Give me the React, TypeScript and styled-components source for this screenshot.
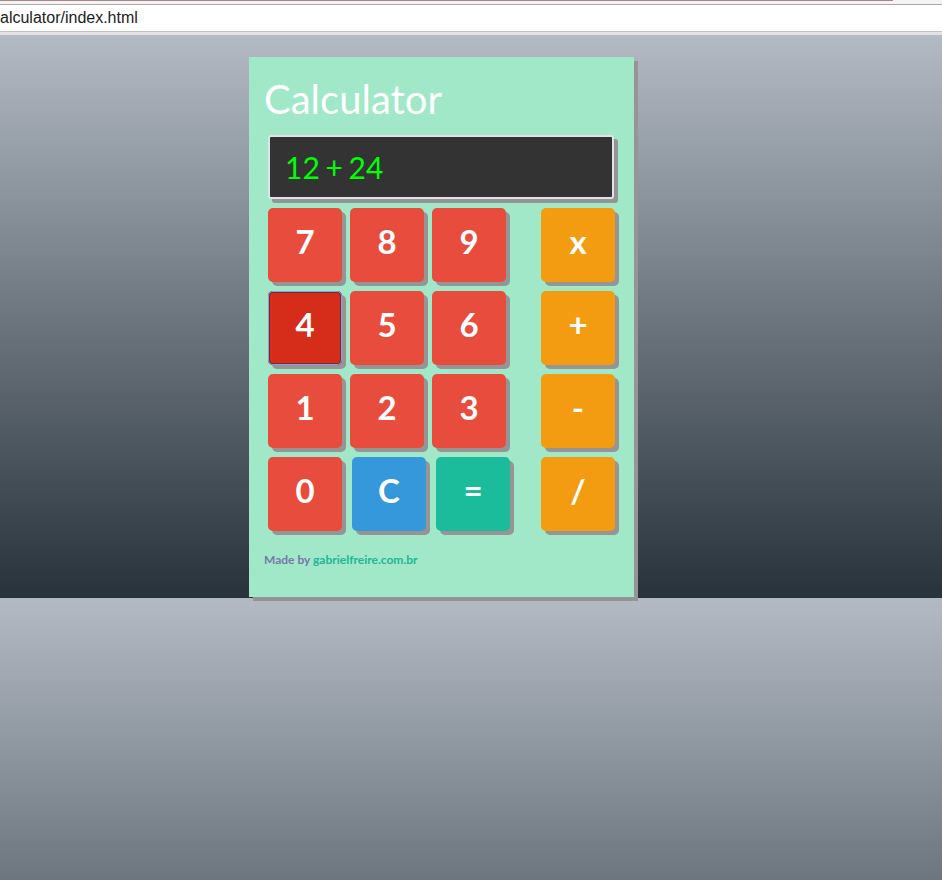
import React from 'react'
import styled, { createGlobalStyle } from 'styled-components'

const GlobalStyle = createGlobalStyle`
    html, body {
        margin: 0;
        padding: 0;
        background: #737b84;
    }
    * {
        box-sizing: border-box;
    }
`

const Screen = styled.div`
    width: 942px;
    height: 880px;
    overflow: hidden;
    display: flex;
    flex-direction: column;
`

const TabStrip = styled.div`
    height: 5px;
    background: #f3f3f3;
    border-bottom: 1px solid #a9a9a9;
`

const TabLine = styled.div`
    width: 893px;
    height: 1px;
    background: #a48686;
`

const AddressBar = styled.div`
    height: 27px;
    background: #ffffff;
    border-bottom: 1px solid #c2c2c2;
    display: flex;
    align-items: center;
    padding-bottom: 1px;
    font-family: 'Liberation Sans', Arial, sans-serif;
    font-size: 16px;
    color: #1c1c1c;
    white-space: nowrap;
`

const BarEdge = styled.div`
    height: 3px;
    background: #e4e4e4;
`

const Page = styled.div`
    flex: 1;
    padding-top: 22px;
    padding-left: 249px;
    background: linear-gradient(#b3bac4, #27323b) 0 0 / 100% 563px repeat-y;
`

const Card = styled.div`
    width: 385px;
    padding: 18px 15px 30px;
    background: #a0e8c8;
    box-shadow: 4px 4px 0 #959595;
    font-family: Lato, 'Open Sans', sans-serif;
`

const Title = styled.h1`
    margin: 0 0 12px;
    font-size: 40px;
    line-height: 48px;
    font-weight: 400;
    color: #ffffff;
`

const Display = styled.div`
    width: 346px;
    height: 64px;
    margin-left: 4px;
    padding: 0 15px;
    background: #333333;
    border: 2px solid #dde3e6;
    border-radius: 3px;
    box-shadow: 4px 4px 0 #959595;
    color: #00ff00;
    font-size: 30px;
    line-height: 60px;
    word-spacing: -2px;
`

const Keypad = styled.div`
    width: 347px;
    margin: 9px 0 0 4px;
    display: flex;
    flex-direction: column;
    gap: 9px;
`

const Row = styled.div`
    display: flex;
    justify-content: space-between;
`

const Digits = styled.div<{ $gap: number }>`
    display: flex;
    gap: ${p => p.$gap}px;
`

const colors = {
    digit: '#e74c3c',
    op: '#f39c12',
    clear: '#3498db',
    equals: '#1abc9c',
}

const Key = styled.button<{ $kind: keyof typeof colors; $pressed?: boolean }>`
    width: 74px;
    height: 74px;
    padding: 0 0 9px;
    border: none;
    border-radius: 5px;
    display: flex;
    align-items: center;
    justify-content: center;
    font-family: Lato, 'Open Sans', sans-serif;
    font-size: 33px;
    font-weight: 700;
    color: #ffffff;
    background: ${p => (p.$pressed ? '#d62c1a' : colors[p.$kind])};
    box-shadow: ${p =>
        p.$pressed
            ? 'inset 0 0 0 1px #7fa6dc, inset 0 0 0 2px #7d2630, 4px 4px 0 #959595'
            : '4px 4px 0 #959595'};
    cursor: pointer;
`

const Footer = styled.p`
    margin: 22px 0 0;
    font-size: 12px;
    font-weight: 700;
    line-height: 14px;
    color: #7b74ad;
`

const Link = styled.a`
    color: #22b597;
    text-decoration: none;
`

const rows = [
    { digits: ['7', '8', '9'], op: 'x' },
    { digits: ['4', '5', '6'], op: '+' },
    { digits: ['1', '2', '3'], op: '-' },
]

export default function App() {
    return (
        <Screen>
            <GlobalStyle />
            <TabStrip>
                <TabLine />
            </TabStrip>
            <AddressBar>alculator/index.html</AddressBar>
            <BarEdge />
            <Page>
                <Card>
                    <Title>Calculator</Title>
                    <Display>12 + 24</Display>
                    <Keypad>
                        {rows.map(row => (
                            <Row key={row.op}>
                                <Digits $gap={8}>
                                    {row.digits.map(d => (
                                        <Key key={d} $kind="digit" $pressed={d === '4'}>
                                            {d}
                                        </Key>
                                    ))}
                                </Digits>
                                <Key $kind="op">{row.op}</Key>
                            </Row>
                        ))}
                        <Row>
                            <Digits $gap={10}>
                                <Key $kind="digit">0</Key>
                                <Key $kind="clear">C</Key>
                                <Key $kind="equals">=</Key>
                            </Digits>
                            <Key $kind="op">/</Key>
                        </Row>
                    </Keypad>
                    <Footer>
                        Made by <Link href="#">gabrielfreire.com.br</Link>
                    </Footer>
                </Card>
            </Page>
        </Screen>
    )
}
